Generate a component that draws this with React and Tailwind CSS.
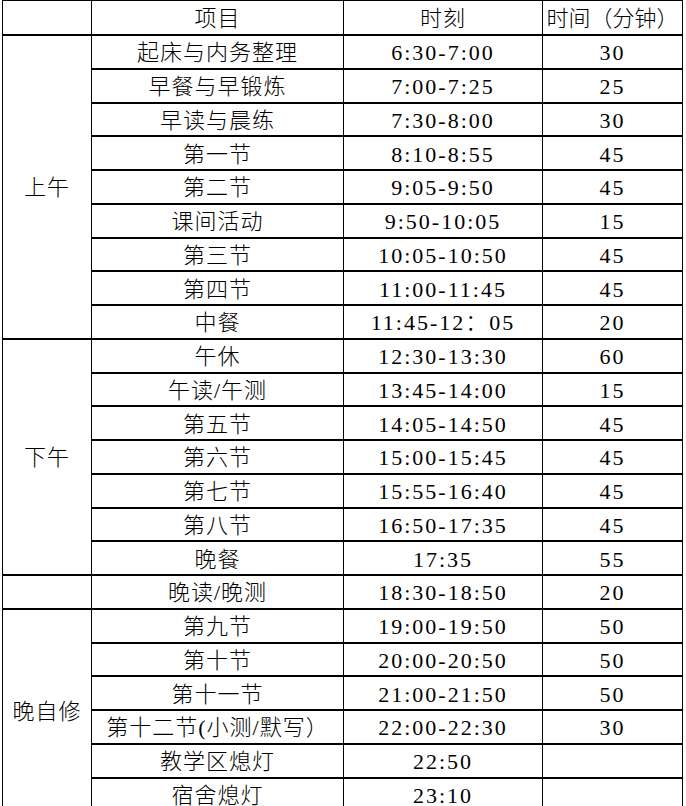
import React from "react";

const sections = [
  {
    label: "上午",
    span: "row-span-9",
    rows: [
      ["起床与内务整理", "6:30-7:00", "30"],
      ["早餐与早锻炼", "7:00-7:25", "25"],
      ["早读与晨练", "7:30-8:00", "30"],
      ["第一节", "8:10-8:55", "45"],
      ["第二节", "9:05-9:50", "45"],
      ["课间活动", "9:50-10:05", "15"],
      ["第三节", "10:05-10:50", "45"],
      ["第四节", "11:00-11:45", "45"],
      ["中餐", "11:45-12：05", "20"],
    ],
  },
  {
    label: "下午",
    span: "row-span-7",
    rows: [
      ["午休", "12:30-13:30", "60"],
      ["午读/午测", "13:45-14:00", "15"],
      ["第五节", "14:05-14:50", "45"],
      ["第六节", "15:00-15:45", "45"],
      ["第七节", "15:55-16:40", "45"],
      ["第八节", "16:50-17:35", "45"],
      ["晚餐", "17:35", "55"],
    ],
  },
  {
    label: "",
    span: "row-span-1",
    rows: [["晚读/晚测", "18:30-18:50", "20"]],
  },
  {
    label: "晚自修",
    span: "row-span-6",
    rows: [
      ["第九节", "19:00-19:50", "50"],
      ["第十节", "20:00-20:50", "50"],
      ["第十一节", "21:00-21:50", "50"],
      ["第十二节(小测/默写）", "22:00-22:30", "30"],
      ["教学区熄灯", "22:50", ""],
      ["宿舍熄灯", "23:10", ""],
    ],
  },
];

const cell =
  "flex items-center justify-center pt-[3px] border-b-2 border-r border-black whitespace-nowrap overflow-hidden";

export default function App() {
  const children = [];
  children.push(
    <div key="h0" className={cell}></div>,
    <div key="h1" className={cell + " tracking-[1px]"}>项目</div>,
    <div key="h2" className={cell + " tracking-[1px]"}>时刻</div>,
    <div key="h3" className={cell}>时间（分钟）</div>
  );
  sections.forEach((s, si) => {
    children.push(
      <div key={"s" + si} className={cell + " " + s.span + " tracking-[1px]"}>
        {s.label}
      </div>
    );
    s.rows.forEach((r, ri) => {
      children.push(
        <div key={`r${si}-${ri}-a`} className={cell + " tracking-[1px]"}>
          {r[0]}
        </div>,
        <div key={`r${si}-${ri}-b`} className={cell + " tracking-[2px]"}>
          {r[1]}
        </div>,
        <div key={`r${si}-${ri}-c`} className={cell + " tracking-[2px]"}>
          {r[2]}
        </div>
      );
    });
  });

  return (
    <div
      className="w-[686px] h-[806px] overflow-hidden bg-white text-black text-[22px] leading-none font-light"
      style={{ fontFamily: '"Liberation Serif", "Noto Sans CJK SC", serif' }}
    >
      <div className="ml-[2px] w-[681px] grid grid-cols-[89px_252px_199px_140px] grid-rows-[35px_repeat(23,33.75px)] border-t border-l border-black">
        {children}
      </div>
    </div>
  );
}
